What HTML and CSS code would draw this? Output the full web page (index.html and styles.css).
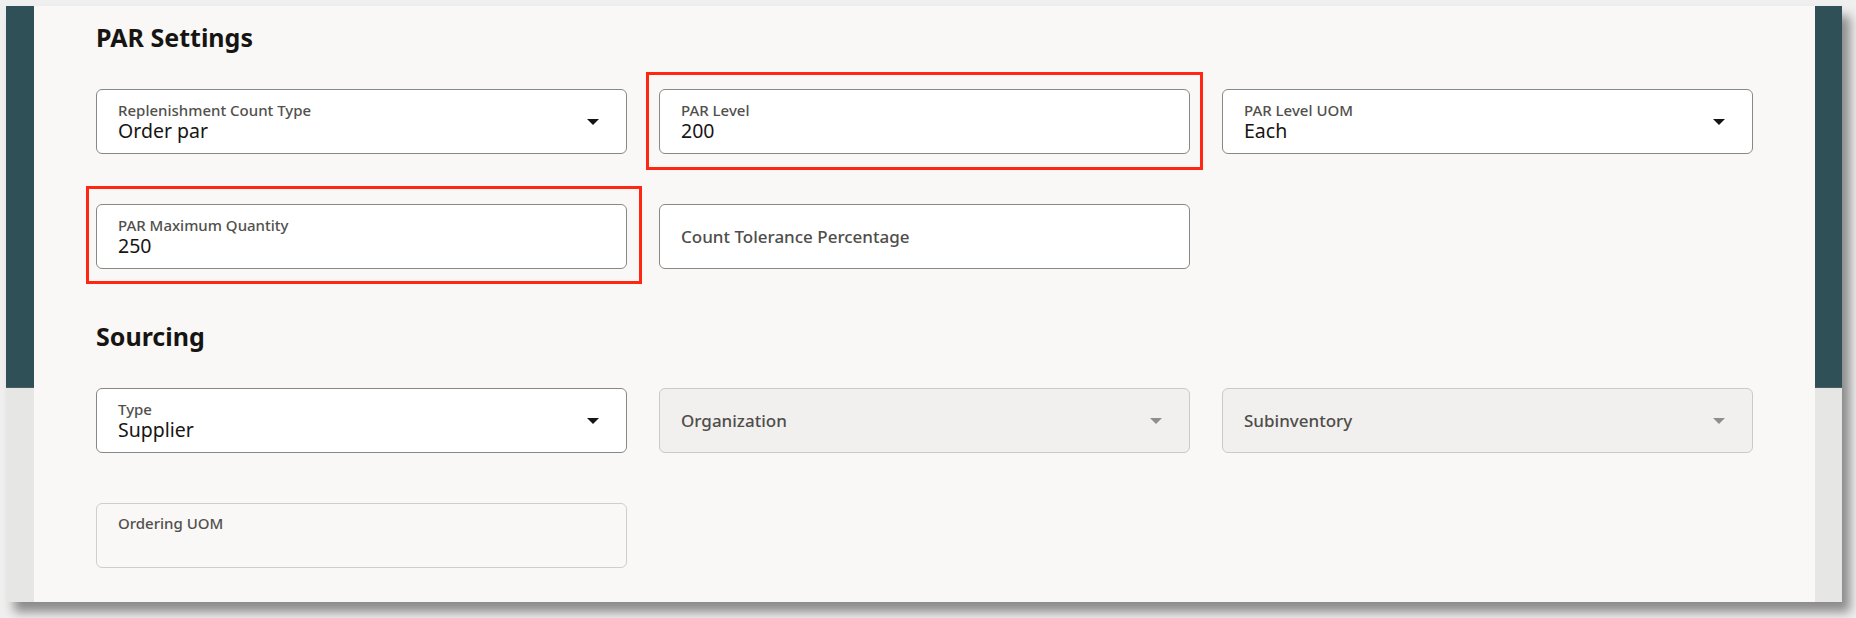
FILE: index.html
```html
<!DOCTYPE html>
<html lang="en">
<head>
<meta charset="utf-8">
<title>PAR Settings</title>
<link rel="stylesheet" href="styles.css">
</head>
<body>
<div class="window">
  <main class="card">
    <section class="section">
      <h2 class="section-title">PAR Settings</h2>
      <div class="grid">
        <div class="field select">
          <div class="field-text">
            <span class="label">Replenishment Count Type</span>
            <span class="value">Order par</span>
          </div>
          <svg class="caret" width="12" height="6" viewBox="0 0 12 6"><polygon points="0,0 12,0 6,6"/></svg>
        </div>
        <div class="field highlight hl-a">
          <div class="field-text">
            <span class="label">PAR Level</span>
            <span class="value">200</span>
          </div>
          <span class="mark mark-a"></span>
        </div>
        <div class="field select">
          <div class="field-text">
            <span class="label">PAR Level UOM</span>
            <span class="value">Each</span>
          </div>
          <svg class="caret" width="12" height="6" viewBox="0 0 12 6"><polygon points="0,0 12,0 6,6"/></svg>
        </div>
        <div class="field highlight">
          <div class="field-text">
            <span class="label">PAR Maximum Quantity</span>
            <span class="value">250</span>
          </div>
          <span class="mark mark-b"></span>
        </div>
        <div class="field empty">
          <span class="placeholder">Count Tolerance Percentage</span>
        </div>
      </div>
    </section>
    <section class="section">
      <h2 class="section-title">Sourcing</h2>
      <div class="grid">
        <div class="field select">
          <div class="field-text">
            <span class="label">Type</span>
            <span class="value">Supplier</span>
          </div>
          <svg class="caret" width="12" height="6" viewBox="0 0 12 6"><polygon points="0,0 12,0 6,6"/></svg>
        </div>
        <div class="field empty disabled select">
          <span class="placeholder">Organization</span>
          <svg class="caret" width="12" height="6" viewBox="0 0 12 6"><polygon points="0,0 12,0 6,6"/></svg>
        </div>
        <div class="field empty disabled select">
          <span class="placeholder">Subinventory</span>
          <svg class="caret" width="12" height="6" viewBox="0 0 12 6"><polygon points="0,0 12,0 6,6"/></svg>
        </div>
        <div class="field readonly">
          <div class="field-text">
            <span class="label">Ordering UOM</span>
          </div>
        </div>
      </div>
    </section>
  </main>
</div>
</body>
</html>
```
FILE: styles.css
```css
html, body {
  margin: 0;
  padding: 0;
}

body {
  background: #efefef;
  font-family: "Noto Sans", "Open Sans", sans-serif;
  color: #161513;
  width: 1856px;
  height: 618px;
  overflow: hidden;
}

.window {
  margin: 6px 0 0 6px;
  width: 1836px;
  height: 596px;
  display: flex;
  background: linear-gradient(to bottom, #2f5056 0, #2f5056 381px, #4a5e62 381px, #4a5e62 382px, #e6e6e4 382px);
  box-shadow: 8px 10px 10px rgba(0, 0, 0, 0.42);
}

.card {
  margin: 0 27px 0 28px;
  flex: 1;
  background: #f9f8f6;
  padding: 16px 62px 35px 62px;
  box-sizing: border-box;
  display: flex;
  flex-direction: column;
  gap: 52px;
}

.section-title {
  margin: 0 0 37px 0;
  font-size: 25px;
  line-height: 30px;
  font-weight: 700;
  color: #161513;
}

.grid {
  display: grid;
  grid-template-columns: repeat(3, 1fr);
  gap: 50px 32px;
}

.field {
  position: relative;
  height: 65px;
  box-sizing: border-box;
  border: 1px solid #8a8886;
  border-radius: 6px;
  background: #ffffff;
  padding: 12px 27px 0 21px;
  display: flex;
  align-items: flex-start;
}

.field-text {
  flex: 1;
  display: flex;
  flex-direction: column;
}

.label {
  font-size: 15px;
  line-height: 17px;
  font-weight: 500;
  color: #51504d;
}

.value {
  font-size: 19.5px;
  line-height: 24px;
  color: #161513;
}

.caret {
  align-self: center;
  margin-top: -12px;
  fill: #161513;
  flex: none;
}

.field.empty {
  padding-top: 0;
  align-items: center;
}

.field.empty .caret {
  margin-top: 0;
}

.placeholder {
  flex: 1;
  font-size: 17px;
  line-height: 22px;
  font-weight: 500;
  color: #4f4d4a;
}

.field.disabled {
  background: #f1f0ee;
  border-color: #cbcac8;
}

.field.disabled .caret {
  fill: #8f8e8c;
}

.field.readonly {
  background: transparent;
  border-color: #cfcecc;
  padding-top: 11px;
}

.mark {
  position: absolute;
  border: 3px solid #ff2612;
  pointer-events: none;
}

.mark-a {
  top: -18px;
  bottom: -17px;
  left: -14px;
  right: -14px;
}

.mark-b {
  top: -19px;
  bottom: -16px;
  left: -11px;
  right: -16px;
}
```
